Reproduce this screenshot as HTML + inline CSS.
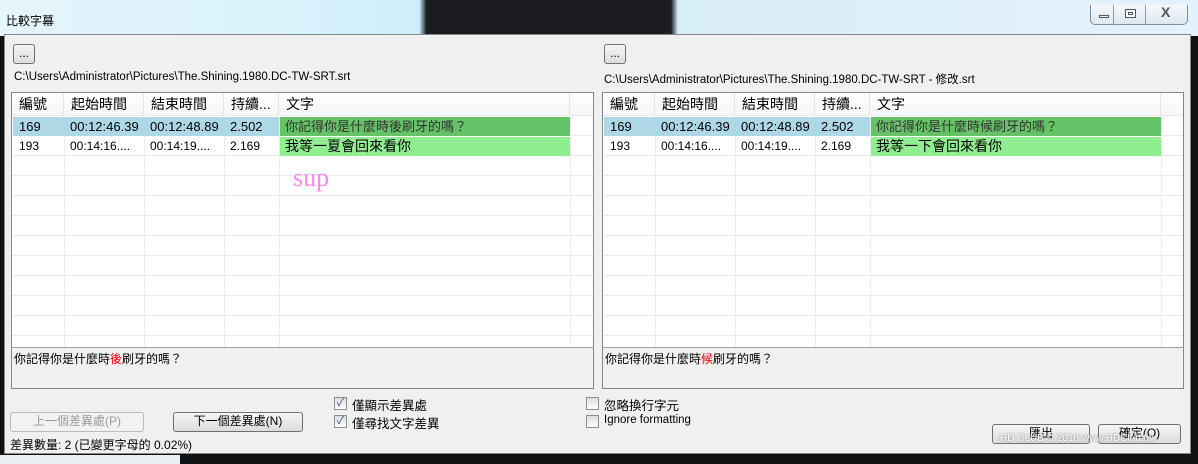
<!DOCTYPE html>
<html><head><meta charset="utf-8"><style>
*{margin:0;padding:0;box-sizing:border-box}
body{width:1198px;height:464px;overflow:hidden;background:#111;font-family:"Liberation Sans","Noto Sans CJK TC",sans-serif;font-size:12px;color:#000;position:relative}
.a{position:absolute}
.title{left:0;top:0;width:1198px;height:36px;background:linear-gradient(90deg,#e6f4fb 0,#d8f2fc 25%,#cdeefa 35%,#1a1c20 35.6%,#1a1c20 56%,#d8eef8 56.6%,#e4f2fb 100%)}
.client{left:4px;top:34px;width:1187px;height:420px;background:#f0f0f0;border:1px solid #888}
.btn{background:linear-gradient(#f6f6f6,#dcdcdc);border:1px solid #707070;border-radius:3px;text-align:center;font-size:12px;line-height:17px}
.grid{background:#fff;border:1px solid #828790;overflow:hidden}
.rows{background-image:repeating-linear-gradient(#fff 0,#fff 19px,#ececec 19px,#ececec 20px)}
.vl{position:absolute;top:0;bottom:0;width:1px;background:#ececec}
.hd{position:absolute;top:0;height:22px;line-height:22px;font-size:14px;padding-left:7px;background:linear-gradient(#fff,#f5f6f7);border-right:1px solid #e5e5e5}
.cell{position:absolute;height:19px;line-height:19px;padding-left:6px;white-space:nowrap;overflow:hidden}
.detail{background:#f0f0f0;border:1px solid #828790;border-top:1px solid #a0a0a0;padding:2px 2px;font-size:12px}
.cb{width:13px;height:13px;border:1px solid #8e8f8f;background:linear-gradient(#ddd,#fff);font-size:11px;line-height:11px;color:#3a54a0;text-align:center}
</style></head><body>
<div class="a title"></div>
<div class="a" style="left:6px;top:12px;font-size:12px">比較字幕</div>
<div class="a" style="left:1090px;top:5px;width:98px;height:20px;border:1px solid #889;border-top:none;border-radius:0 0 5px 5px;background:linear-gradient(#f4f8fb,#dde8f0)"></div>
<div class="a" style="left:1113px;top:5px;width:1px;height:20px;background:#999"></div>
<div class="a" style="left:1145px;top:5px;width:1px;height:20px;background:#999"></div>
<div class="a" style="left:1099px;top:15px;width:10px;height:3px;border:1px solid #555;background:#fff"></div>
<div class="a" style="left:1125px;top:9px;width:11px;height:9px;border:1px solid #555;background:#fff"><div style="margin:2px;width:5px;height:3px;border:1px solid #555"></div></div>
<div class="a" style="left:1161px;top:4px;font-size:14px;color:#555;font-weight:bold">X</div>
<div class="a client"></div>

<!-- left panel -->
<div class="a btn" style="left:13px;top:44px;width:22px;height:20px">...</div>
<div class="a" style="left:14px;top:71px;font-size:11.5px">C:\Users\Administrator\Pictures\The.Shining.1980.DC-TW-SRT.srt</div>
<div class="a grid rows" style="left:11px;top:92px;width:583px;height:256px;background-position:0 3px">
 <div class="vl" style="left:52px"></div><div class="vl" style="left:132px"></div><div class="vl" style="left:212px"></div><div class="vl" style="left:267px"></div><div class="vl" style="left:558px"></div>
 <div class="hd" style="left:0;width:52px">編號</div><div class="hd" style="left:52px;width:80px">起始時間</div><div class="hd" style="left:132px;width:80px">結束時間</div><div class="hd" style="left:212px;width:55px">持續...</div><div class="hd" style="left:267px;width:291px">文字</div><div class="hd" style="left:558px;width:30px"></div>
 <div class="a" style="left:1px;top:24px;width:266px;height:19px;background:#add8e6"></div>
 <div class="a" style="left:268px;top:24px;width:290px;height:19px;background:#66c266"></div>
 <div class="a" style="left:268px;top:44px;width:290px;height:19px;background:#90ee90"></div>
 <div class="cell" style="left:1px;top:24px;font-size:13px">169</div><div class="cell" style="left:52px;top:24px;width:80px;font-size:13px">00:12:46.39</div><div class="cell" style="left:132px;top:24px;width:80px;font-size:13px">00:12:48.89</div><div class="cell" style="left:212px;top:24px;font-size:13px">2.502</div><div class="cell" style="left:267px;top:24px;font-size:13px;color:#333">你記得你是什麼時後刷牙的嗎？</div>
 <div class="cell" style="left:1px;top:44px">193</div><div class="cell" style="left:52px;top:44px">00:14:16....</div><div class="cell" style="left:132px;top:44px">00:14:19....</div><div class="cell" style="left:212px;top:44px">2.169</div><div class="cell" style="left:267px;top:44px;font-size:14px">我等一夏會回來看你</div>
 <div class="a" style="left:281px;top:70px;font-family:'Liberation Serif',serif;font-size:26px;color:#ff88ee">sup</div>
</div>
<div class="a detail" style="left:11px;top:347px;width:583px;height:42px">你記得你是什麼時<span style="color:#e00">後</span>刷牙的嗎？</div>

<!-- right panel -->
<div class="a btn" style="left:604px;top:44px;width:22px;height:20px">...</div>
<div class="a" style="left:604px;top:71px;font-size:11.5px">C:\Users\Administrator\Pictures\The.Shining.1980.DC-TW-SRT - 修改.srt</div>
<div class="a grid rows" style="left:602px;top:92px;width:582px;height:256px;background-position:0 3px">
 <div class="vl" style="left:52px"></div><div class="vl" style="left:132px"></div><div class="vl" style="left:212px"></div><div class="vl" style="left:267px"></div><div class="vl" style="left:558px"></div>
 <div class="hd" style="left:0;width:52px">編號</div><div class="hd" style="left:52px;width:80px">起始時間</div><div class="hd" style="left:132px;width:80px">結束時間</div><div class="hd" style="left:212px;width:55px">持續...</div><div class="hd" style="left:267px;width:291px">文字</div><div class="hd" style="left:558px;width:30px"></div>
 <div class="a" style="left:1px;top:24px;width:266px;height:19px;background:#add8e6"></div>
 <div class="a" style="left:268px;top:24px;width:290px;height:19px;background:#66c266"></div>
 <div class="a" style="left:268px;top:44px;width:290px;height:19px;background:#90ee90"></div>
 <div class="cell" style="left:1px;top:24px;font-size:13px">169</div><div class="cell" style="left:52px;top:24px;width:80px;font-size:13px">00:12:46.39</div><div class="cell" style="left:132px;top:24px;width:80px;font-size:13px">00:12:48.89</div><div class="cell" style="left:212px;top:24px;font-size:13px">2.502</div><div class="cell" style="left:267px;top:24px;font-size:13px;color:#333">你記得你是什麼時候刷牙的嗎？</div>
 <div class="cell" style="left:1px;top:44px">193</div><div class="cell" style="left:52px;top:44px">00:14:16....</div><div class="cell" style="left:132px;top:44px">00:14:19....</div><div class="cell" style="left:212px;top:44px">2.169</div><div class="cell" style="left:267px;top:44px;font-size:14px">我等一下會回來看你</div>
</div>
<div class="a detail" style="left:602px;top:347px;width:582px;height:42px">你記得你是什麼時<span style="color:#e00">候</span>刷牙的嗎？</div>

<!-- bottom controls -->
<div class="a btn" style="left:10px;top:412px;width:134px;height:20px;color:#999;border-color:#bbb;background:#f2f2f2">上一個差異處(P)</div>
<div class="a btn" style="left:173px;top:412px;width:130px;height:20px">下一個差異處(N)</div>
<div class="a cb" style="left:334px;top:397px">✓</div><div class="a" style="left:352px;top:395px;font-size:12.5px">僅顯示差異處</div>
<div class="a cb" style="left:334px;top:415px">✓</div><div class="a" style="left:352px;top:413px;font-size:12.5px">僅尋找文字差異</div>
<div class="a cb" style="left:586px;top:397px"></div><div class="a" style="left:604px;top:395px;font-size:12.5px">忽略換行字元</div>
<div class="a cb" style="left:586px;top:415px"></div><div class="a" style="left:604px;top:414px;font-size:11.5px">Ignore formatting</div>
<div class="a" style="left:10px;top:436px;font-size:12px">差異數量: 2 (已變更字母的 0.02%)</div>
<div class="a btn" style="left:992px;top:424px;width:98px;height:20px">匯出</div>
<div class="a btn" style="left:1098px;top:424px;width:83px;height:20px">確定(O)</div>
<div class="a" style="left:1000px;top:433px;font-size:10px;color:#fff;text-shadow:0 0 2px #666">HD CLUB © 2018 www.HDClub.tw</div>
<div class="a" style="left:0;top:455px;width:180px;height:9px;background:#e8eef2"></div>
</body></html>
